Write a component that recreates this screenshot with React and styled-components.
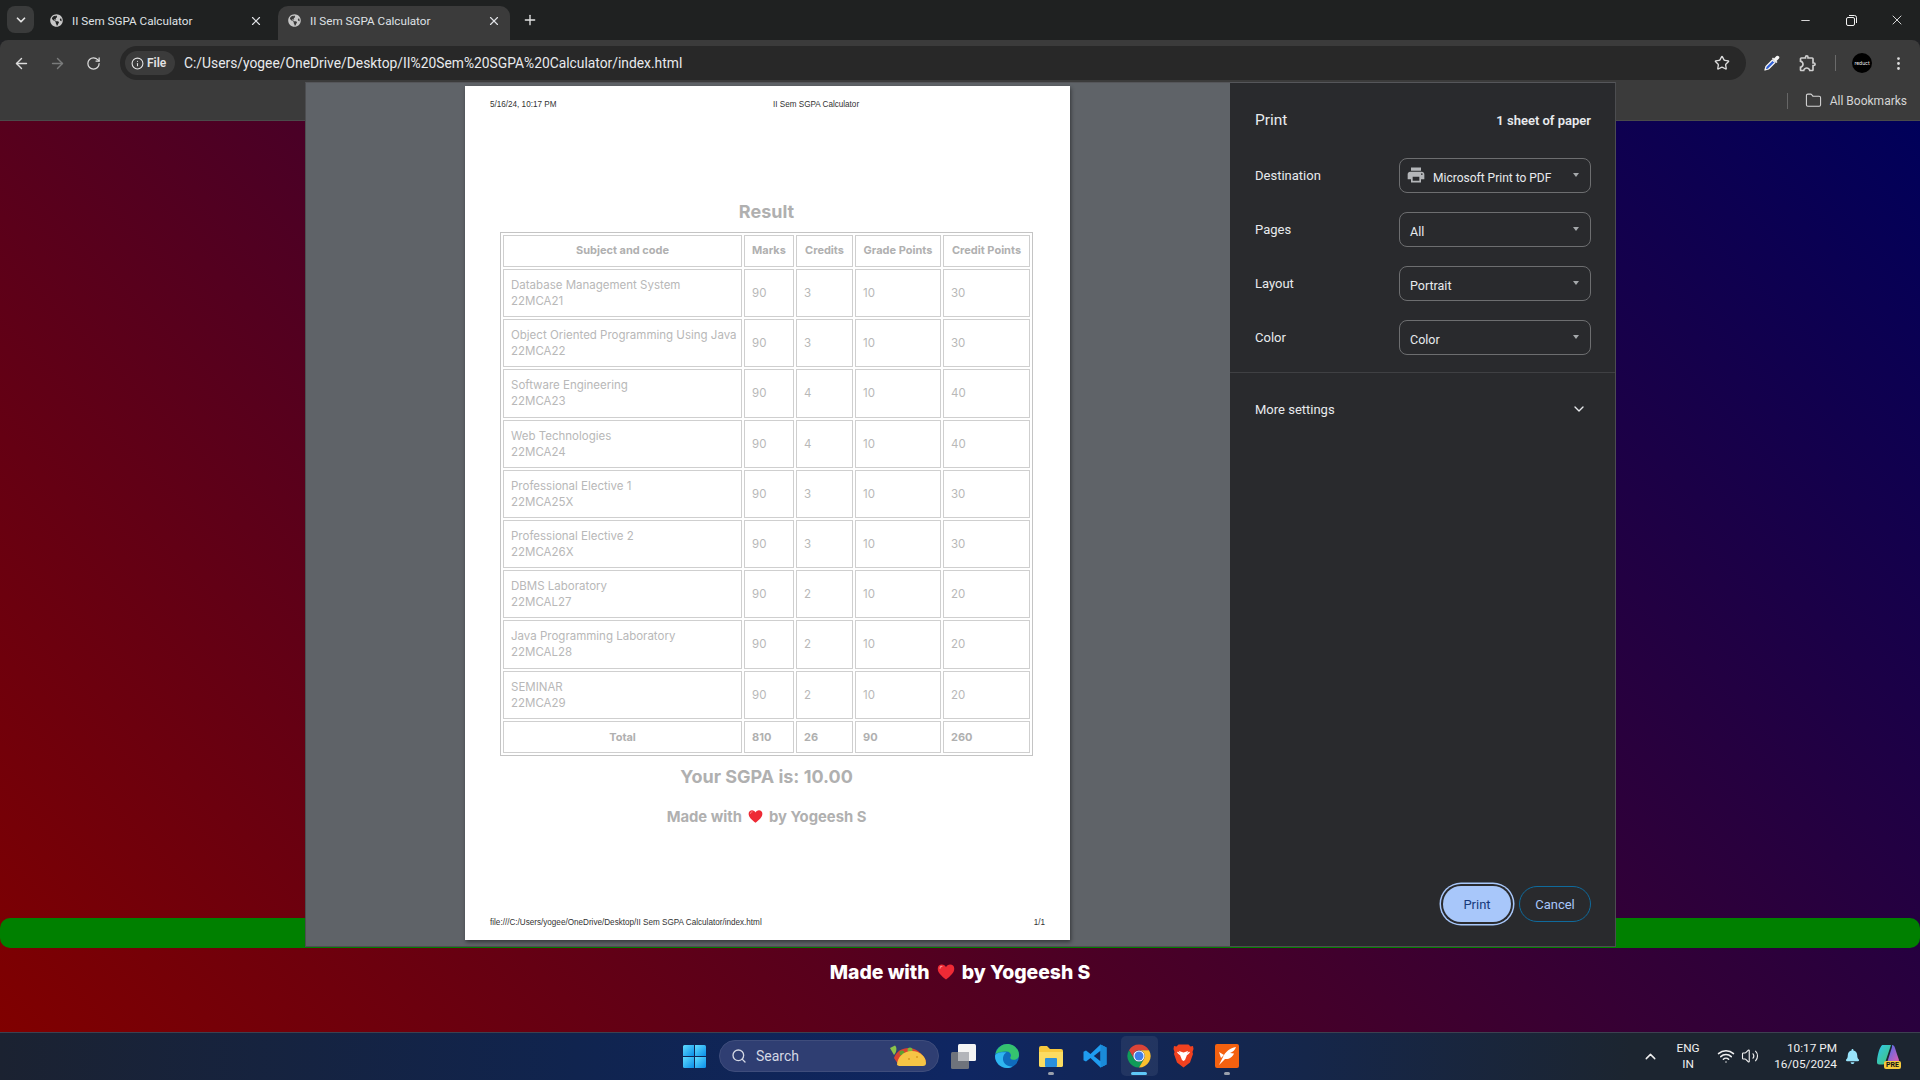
import React from 'react'
import styled, { createGlobalStyle } from 'styled-components'
import {
  ArrowLeft,
  ArrowRight,
  ChevronDown,
  ChevronUp,
  EllipsisVertical,
  Folder,
  Info,
  Minus,
  Plus,
  RotateCw,
  Search,
  Star,
  Volume2,
  Wifi,
  X,
} from 'lucide-react'
import { FaGlobeAmericas, FaBell } from 'react-icons/fa'
import { MdOutlineExtension, MdPrint } from 'react-icons/md'

const uiFont = `Roboto, "Noto Sans", sans-serif`
const docFont = `Inter, "Noto Sans", sans-serif`

const subjects = [
  { name: 'Database Management System', code: '22MCA21', credits: 3, points: 30 },
  { name: 'Object Oriented Programming Using Java', code: '22MCA22', credits: 3, points: 30 },
  { name: 'Software Engineering', code: '22MCA23', credits: 4, points: 40 },
  { name: 'Web Technologies', code: '22MCA24', credits: 4, points: 40 },
  { name: 'Professional Elective 1', code: '22MCA25X', credits: 3, points: 30 },
  { name: 'Professional Elective 2', code: '22MCA26X', credits: 3, points: 30 },
  { name: 'DBMS Laboratory', code: '22MCAL27', credits: 2, points: 20 },
  { name: 'Java Programming Laboratory', code: '22MCAL28', credits: 2, points: 20 },
  { name: 'SEMINAR', code: '22MCA29', credits: 2, points: 20 },
]

const GlobalStyle = createGlobalStyle`
  html, body {
    margin: 0;
    padding: 0;
    height: 100%;
    overflow: hidden;
    background: #202124;
    font-family: ${uiFont};
  }
  #root { height: 100%; }
  * { box-sizing: border-box; }
`

const Screen = styled.div`
  position: relative;
  display: flex;
  flex-direction: column;
  width: 1920px;
  height: 1080px;
  overflow: hidden;
`

/* browser chrome */
const TabStrip = styled.div`
  display: flex;
  align-items: flex-end;
  height: 40px;
  padding-left: 7px;
  background: #1f2121;
`

const TabMenu = styled.div`
  display: flex;
  align-items: center;
  justify-content: center;
  width: 27px;
  height: 27px;
  margin: 0 6px 7px 0;
  border-radius: 8px;
  background: #3a3b3b;
  color: #e3e3e3;
`

const Tab = styled.div`
  display: flex;
  align-items: center;
  width: 232px;
  height: 34px;
  margin-right: 6px;
  padding: 0 9px 5px 10px;
  border-radius: 10px 10px 0 0;
  background: ${({ $active }) => ($active ? '#3b3b3b' : 'transparent')};
  color: #dfe1e5;
  font-size: 11.7px;
`

const TabTitle = styled.span`
  flex: 1;
  margin-left: 9px;
  white-space: nowrap;
`

const NewTab = styled.div`
  display: flex;
  align-items: center;
  justify-content: center;
  width: 24px;
  height: 28px;
  margin: 0 0 6px 2px;
  color: #e3e3e3;
`

const WindowControls = styled.div`
  display: flex;
  align-self: stretch;
  margin-left: auto;
`

const WindowButton = styled.div`
  display: flex;
  align-items: center;
  justify-content: center;
  width: 46px;
  color: #f2f2f2;
`

const Toolbar = styled.div`
  display: flex;
  align-items: flex-start;
  height: 42px;
  padding: 6px 4px 0 3px;
  border-radius: 8px 8px 0 0;
  background: #3b3b3b;
`

const NavButton = styled.div`
  display: flex;
  align-items: center;
  justify-content: center;
  width: 36px;
  height: 34px;
  color: ${({ $dim }) => ($dim ? '#7a7b7b' : '#dcdcdc')};
`

const Omnibox = styled.div`
  display: flex;
  align-items: center;
  width: 1626px;
  height: 34px;
  margin: 0 8px 0 9px;
  padding: 0 16px 0 5px;
  border-radius: 17px;
  background: #282828;
`

const FileChip = styled.div`
  display: flex;
  align-items: center;
  gap: 3px;
  width: 50px;
  height: 24px;
  padding-left: 6px;
  border-radius: 12px;
  background: #3b3b3b;
  color: #e3e3e3;
  font-size: 12px;
  font-weight: 600;
`

const Url = styled.span`
  flex: 1;
  margin-left: 9px;
  color: #e8eaed;
  font-size: 13.83px;
  white-space: nowrap;
`

const ToolbarDivider = styled.div`
  width: 1px;
  height: 16px;
  margin: 9px 8px 0 9px;
  background: #6a6a6a;
`

const Avatar = styled.div`
  display: flex;
  align-items: center;
  justify-content: center;
  width: 20px;
  height: 20px;
  border-radius: 50%;
  background: #000;
  color: #eee;
  font-size: 5px;
  font-family: ${docFont};
`

const BookmarksBar = styled.div`
  display: flex;
  align-items: center;
  justify-content: flex-end;
  height: 39px;
  padding: 0 13px 1px 0;
  border-bottom: 1px solid #4a4a4a;
  background: #3b3b3b;
  color: #d5d5d5;
  font-size: 12px;
`

const BookmarkDivider = styled.div`
  width: 1px;
  height: 16px;
  margin-right: 17px;
  background: #666;
`

const BookmarkLabel = styled.span`
  margin-left: 8px;
`

/* page behind the print dialog */
const Backdrop = styled.main`
  flex: 1;
  display: flex;
  flex-direction: column;
  justify-content: flex-end;
  background: linear-gradient(45deg, #800000, #00005a);
`

const GreenBar = styled.div`
  height: 30px;
  border-radius: 10px;
  background: #008000;
`

const BackdropFooter = styled.div`
  display: flex;
  align-items: center;
  justify-content: center;
  gap: 7px;
  height: 84px;
  padding-bottom: 36px;
  color: #fff;
  font-family: ${docFont};
  font-size: 19.4px;
  font-weight: 800;
`

/* print dialog */
const PrintDialog = styled.div`
  position: absolute;
  top: 82px;
  left: 305px;
  display: flex;
  width: 1311px;
  height: 865px;
  border: 1px solid #4c4d50;
  border-top-color: #55565a;
`

const Preview = styled.div`
  flex: 1;
  display: flex;
  justify-content: center;
  padding: 3px 1px 0 0;
  background: #5f6368;
`

const Sheet = styled.div`
  display: flex;
  flex-direction: column;
  width: 605px;
  height: 854px;
  padding: 14px 25px 12px;
  background: #fff;
  box-shadow: 1px 2px 4px rgba(0, 0, 0, 0.45);
`

const SheetLine = styled.div`
  display: grid;
  grid-template-columns: ${({ $head }) => ($head ? '283px 1fr' : '1fr auto')};
  color: #333;
  font-family: "Liberation Sans", sans-serif;
  font-size: 8.15px;
  line-height: 10px;
  white-space: nowrap;
`

const SheetBody = styled.div`
  display: flex;
  flex-direction: column;
  align-items: center;
  margin: 90px -13px 0 -15px;
  color: #b0b0b0;
  font-family: ${docFont};
`

const ResultTitle = styled.h1`
  margin: 0 0 8px;
  font-size: 18px;
  line-height: 24px;
  font-weight: 700;
`

const ResultTable = styled.table`
  width: 533px;
  table-layout: fixed;
  border: 1px solid #c4c4c4;
  border-collapse: separate;
  border-spacing: 2px;
  font-size: 11.5px;
  line-height: 16px;
`

const Column = styled.col`
  width: ${({ $w }) => $w}px;
`

const HeadCell = styled.th`
  height: 32px;
  padding: 0 7px 2px;
  border: 1px solid #cfcfcf;
  font-size: 11px;
  font-weight: 700;
  text-align: ${({ $left }) => ($left ? 'left' : 'center')};
  white-space: nowrap;
`

const TotalCell = styled(HeadCell)`
  padding-bottom: 0;
`

const BodyCell = styled.td`
  height: 48.2px;
  padding: 0 7px;
  border: 1px solid #cfcfcf;
  color: #b8b8b8;
  font-weight: 400;
  white-space: nowrap;
`

const SgpaLine = styled.div`
  margin-top: 9px;
  font-size: 18px;
  line-height: 24px;
  font-weight: 700;
`

const MadeWith = styled.div`
  display: flex;
  align-items: center;
  gap: 6px;
  margin-top: 18px;
  font-size: 14.8px;
  line-height: 20px;
  font-weight: 700;
`

const SheetFoot = styled(SheetLine)`
  margin-top: auto;
`

const Sidebar = styled.aside`
  display: flex;
  flex-direction: column;
  width: 385px;
  padding-top: 27px;
  background: #292a2d;
  color: #e8eaed;
  font-size: 13px;
`

const SidebarHead = styled.div`
  display: flex;
  align-items: center;
  justify-content: space-between;
  height: 20px;
  margin-bottom: 28px;
  padding: 0 24px 0 25px;
`

const SidebarTitle = styled.span`
  font-size: 15.5px;
`

const SheetCount = styled.span`
  font-weight: 600;
`

const SettingRow = styled.div`
  display: flex;
  align-items: center;
  justify-content: space-between;
  height: 35px;
  margin-bottom: 19px;
  padding: 0 24px 0 25px;
`

const Select = styled.div`
  position: relative;
  display: flex;
  align-items: center;
  width: 192px;
  height: 35px;
  padding: 4px 0 0 ${({ $icon }) => ($icon ? '6px' : '10px')};
  border: 1px solid #6d6e70;
  border-radius: 8px;
  font-size: 12.5px;
`

const SelectIcon = styled(MdPrint)`
  margin: -5px 7px 0 0;
  color: #b4b6b9;
`

const DestinationName = styled.span`
  font-size: 12px;
`

const Caret = styled.span`
  position: absolute;
  top: 14px;
  right: 11px;
  border-left: 3.5px solid transparent;
  border-right: 3.5px solid transparent;
  border-top: 4.5px solid #a5a8ab;
`

const SidebarRule = styled.div`
  height: 1px;
  margin-top: -2px;
  background: #3f4043;
`

const MoreSettings = styled.div`
  display: flex;
  align-items: center;
  justify-content: space-between;
  margin-top: 26px;
  padding: 0 28px 0 25px;
  height: 20px;
`

const DialogActions = styled.div`
  display: flex;
  justify-content: flex-end;
  gap: 8px;
  margin-top: auto;
  padding: 0 24px 24px;
`

const PrintButton = styled.div`
  display: flex;
  align-items: center;
  justify-content: center;
  width: 68px;
  height: 36px;
  border-radius: 18px;
  background: #a8c7fa;
  box-shadow: 0 0 0 2px #292a2d, 0 0 0 3.5px #a8c7fa;
  color: #17397a;
  font-size: 13px;
`

const CancelButton = styled.div`
  display: flex;
  align-items: center;
  justify-content: center;
  width: 72px;
  height: 36px;
  border: 1px solid #0f6a9c;
  border-radius: 18px;
  color: #a8c7fa;
  font-size: 13px;
`

/* windows taskbar */
const Taskbar = styled.footer`
  position: relative;
  display: flex;
  align-items: center;
  height: 48px;
  padding-bottom: 1px;
  border-top: 1px solid #3c4150;
  background: linear-gradient(90deg, #1b2231 0%, #10244f 30%, #0f2662 50%, #15264a 68%, #1c2530 85%);
`

const TaskIcons = styled.div`
  display: flex;
  align-items: center;
  margin-left: 683px;
`

const SearchPill = styled.div`
  display: flex;
  align-items: center;
  width: 220px;
  height: 32px;
  margin: 0 2px 0 13px;
  padding: 0 10px 0 11px;
  border-radius: 16px;
  background: #2f3e72;
  border: 1px solid #3f4d7c;
  color: #d4d8e4;
  font-size: 14px;
`

const SearchLabel = styled.span`
  flex: 1;
  margin-left: 9px;
`

const TaskItem = styled.div`
  position: relative;
  display: flex;
  align-items: center;
  justify-content: center;
  width: 37px;
  height: 40px;
  margin: 0 3.5px;
  border-radius: 5px;
  background: ${({ $active }) => ($active ? 'rgba(255,255,255,0.07)' : 'transparent')};
`

const TaskDot = styled.span`
  position: absolute;
  bottom: 1px;
  left: 50%;
  width: ${({ $active }) => ($active ? '16px' : '6px')};
  height: 3px;
  margin-left: ${({ $active }) => ($active ? '-8px' : '-3px')};
  border-radius: 2px;
  background: ${({ $active }) => ($active ? '#5fc8f8' : '#9aa0ac')};
`

const Tray = styled.div`
  display: flex;
  align-items: center;
  margin-left: auto;
  padding-right: 11px;
  color: #f0f0f0;
  font-size: 11.8px;
`

const TrayText = styled.div`
  line-height: 16px;
  text-align: ${({ $align }) => $align};
  white-space: nowrap;
`

const TraySlot = styled.div`
  display: flex;
  align-items: center;
  justify-content: ${({ $end }) => ($end ? 'flex-end' : 'center')};
  width: ${({ $w }) => $w}px;
`

const CopilotBadge = styled.div`
  position: relative;
  display: flex;
  justify-content: center;
  width: 26px;
  height: 26px;
`

const PreTag = styled.span`
  position: absolute;
  right: 0;
  bottom: 0;
  padding: 0 2px;
  border-radius: 2px;
  background: #f6c93c;
  color: #111;
  font-size: 7px;
  font-weight: 700;
  line-height: 8px;
`

function Heart({ size = 14 }) {
  return (
    <svg width={size} height={size} viewBox="0 0 24 24">
      <path d="M12 22C6 17 1 13 1 7.500C1 4 3.500 2 6.500 2C9 2 11 3.500 12 5.500C13 3.500 15 2 17.500 2C20.500 2 23 4 23 7.500C23 13 18 17 12 22Z" fill="#ee2a35" />
      <path d="M4 7C4 5.500 5 4.500 6.500 4.500" stroke="#ff8f8f" strokeWidth="1.500" fill="none" strokeLinecap="round" />
    </svg>
  )
}

function RestoreIcon() {
  return (
    <svg width="11" height="11" viewBox="0 0 11 11" fill="none" stroke="currentColor">
      <rect x="0.500" y="2.500" width="8" height="8" rx="1.500" />
      <path d="M3 0.500H8.500A2 2 0 0 1 10.500 2.500V8" />
    </svg>
  )
}

function EyeDropper() {
  return (
    <svg width="18" height="18" viewBox="0 0 18 18">
      <path d="M2 16L3 12.500L9.500 6L12 8.500L5.500 15Z" fill="#2f5fd6" stroke="#f2f2f2" strokeWidth="1.300" strokeLinejoin="round" />
      <path d="M9 4.500L13.500 9L14.500 8L13.500 7L16 4.500A1.800 1.800 0 0 0 13.500 2L11 4.500L10 3.500Z" fill="#f5f5f5" />
    </svg>
  )
}

function WindowsLogo() {
  return (
    <svg width="23" height="23" viewBox="0 0 23 23">
      <defs>
        <linearGradient id="winBlue" x1="0" y1="0" x2="1" y2="1">
          <stop offset="0" stopColor="#5fdcff" />
          <stop offset="1" stopColor="#0a8fe8" />
        </linearGradient>
      </defs>
      <path d="M1.500 0H11V11H0V1.500A1.500 1.500 0 0 1 1.500 0Z" fill="url(#winBlue)" />
      <path d="M12 0H21.500A1.500 1.500 0 0 1 23 1.500V11H12Z" fill="url(#winBlue)" />
      <path d="M0 12H11V23H1.500A1.500 1.500 0 0 1 0 21.500Z" fill="url(#winBlue)" />
      <path d="M12 12H23V21.500A1.500 1.500 0 0 1 21.500 23H12Z" fill="url(#winBlue)" />
    </svg>
  )
}

function TacoIcon() {
  return (
    <svg width="40" height="24" viewBox="0 0 40 24">
      <path d="M2 4L7 1.500C9 3 9 8 6 11Z" fill="#8bc34a" />
      <path d="M6 14C9 4 22 1 30 7C34 10 37 14 38 17L10 20Z" fill="#d9432f" />
      <circle cx="14" cy="9" r="2.500" fill="#5fa02e" />
      <circle cx="22" cy="6" r="2.500" fill="#7cb83a" />
      <path d="M9 21C9 13 16 7 24 7C32 7 38 13 38 19C38 21 37 22 35 22H11Z" fill="#f6c445" />
      <circle cx="21" cy="15" r="1" fill="#d89a1f" />
      <circle cx="29" cy="13" r="1" fill="#d89a1f" />
    </svg>
  )
}

function TaskViewIcon() {
  return (
    <svg width="25" height="25" viewBox="0 0 25 25">
      <rect x="0" y="8" width="18" height="17" rx="1.500" fill="#6f737c" />
      <rect x="7" y="0" width="18" height="17" rx="1.500" fill="#f4f4f4" />
      <rect x="7" y="8" width="11" height="9" fill="#b3b5ba" />
    </svg>
  )
}

function EdgeIcon() {
  return (
    <svg width="24" height="24" viewBox="0 0 24 24">
      <circle cx="12" cy="12" r="12" fill="#0f6cbd" />
      <path d="M0.500 10C2 3 8 0 12 0C19 0 24 5 24 11C24 15 20 16.500 17 15.500C15.500 15 15 14 15.500 13C17 11 15 7.500 11.500 7.500C6 7.500 2 9 0.500 10Z" fill="#35c26f" />
      <path d="M0 12C0 19 6 24 12 24C14 24 16 23.500 17.500 22.500C12 23 7.500 19 8 14C8.300 11 10 9 11.500 8.500C6 7.500 0.500 9 0 12Z" fill="#2fb6f0" />
    </svg>
  )
}

function ExplorerIcon() {
  return (
    <svg width="24" height="21" viewBox="0 0 24 21">
      <path d="M0 2A2 2 0 0 1 2 0H8L11 3H22A2 2 0 0 1 24 5V19A2 2 0 0 1 22 21H2A2 2 0 0 1 0 19Z" fill="#f7c93e" />
      <path d="M0 6H24V19A2 2 0 0 1 22 21H2A2 2 0 0 1 0 19Z" fill="#fbdc62" />
      <rect x="6" y="12" width="12" height="9" rx="1" fill="#2a8fdc" />
    </svg>
  )
}

function VsCodeIcon() {
  return (
    <svg width="24" height="24" viewBox="0 0 24 24">
      <path d="M17.500 0.500L23.500 3.500V20.500L17.500 23.500L7.500 14L3 17.500L0.500 16.300V7.700L3 6.500L7.500 10ZM17.500 6.800L10.800 12L17.500 17.200Z" fill="#1f9cf0" fillRule="evenodd" />
      <path d="M17.500 0.500L23.500 3.500V20.500L17.500 23.500Z" fill="#1a8ad8" />
    </svg>
  )
}

function ChromeIcon() {
  return (
    <svg width="24" height="24" viewBox="0 0 24 24">
      <path d="M2 6.200A11.500 11.500 0 0 1 22 6.200H12A5.800 5.800 0 0 0 7 14.900Z" fill="#db4437" />
      <path d="M2 6.200A11.500 11.500 0 0 0 12 23.500L17 14.900A5.800 5.800 0 0 1 7 14.900Z" fill="#0f9d58" />
      <path d="M22 6.200A11.500 11.500 0 0 1 12 23.500L17 14.900A5.800 5.800 0 0 0 12 6.200Z" fill="#fbc02d" />
      <circle cx="12" cy="12" r="5.600" fill="#fff" />
      <circle cx="12" cy="12" r="4.500" fill="#3f7fe8" />
    </svg>
  )
}

function BraveIcon() {
  return (
    <svg width="21" height="24" viewBox="0 0 21 24">
      <path d="M5.500 0.500H15.500L17.500 2.500L20 2L20.500 5L19.500 8L20 10L17 18.500L10.500 23.500L4 18.500L1 10L1.500 8L0.500 5L1 2L3.500 2.500Z" fill="#f1411f" />
      <path d="M6 7L10.500 8.500L15 7L14 11L12 16L10.500 17L9 16L7 11Z" fill="#fff" />
      <path d="M4.500 8L7 10.500M16.500 8L14 10.500" stroke="#fff" strokeWidth="1.300" />
    </svg>
  )
}

function SublimeStyleIcon() {
  return (
    <svg width="24" height="24" viewBox="0 0 24 24">
      <rect width="24" height="24" rx="2" fill="#f4610f" />
      <path d="M4 21L8 13C10 8 15 4 21 3C20 6 18 8 15 9L19 9.500C17.500 13 14 15.500 10 15Z" fill="#fff" />
      <path d="M4 8L9 11L6 14Z" fill="#fff" />
    </svg>
  )
}

function CopilotIcon() {
  return (
    <svg width="24" height="24" viewBox="0 0 24 24">
      <defs>
        <linearGradient id="copilotLeft" x1="0" y1="0" x2="1" y2="1">
          <stop offset="0" stopColor="#2fc7f0" />
          <stop offset="1" stopColor="#44c36d" />
        </linearGradient>
        <linearGradient id="copilotRight" x1="0" y1="0" x2="1" y2="1">
          <stop offset="0" stopColor="#3f6ff0" />
          <stop offset="1" stopColor="#e45bb0" />
        </linearGradient>
      </defs>
      <path d="M7 2H15L9 20C8.500 21 7.500 21.500 6 21.500H3A2 2 0 0 1 1 19.500C1 14 3 6 5 3.500C5.500 2.500 6 2 7 2Z" fill="url(#copilotLeft)" />
      <path d="M16 2C17.500 2 18.500 3 19 5C20.500 10 22 14 23 17C23 19 22 20 20 20H11L16 4Z" fill="url(#copilotRight)" />
    </svg>
  )
}

export default function App() {
  return (
    <Screen>
      <GlobalStyle />
      <TabStrip>
        <TabMenu><ChevronDown size={14} strokeWidth={3} /></TabMenu>
        <Tab>
          <FaGlobeAmericas size={13} color="#c7c7c7" />
          <TabTitle>II Sem SGPA Calculator</TabTitle>
          <X size={14} strokeWidth={2} />
        </Tab>
        <Tab $active>
          <FaGlobeAmericas size={13} color="#c7c7c7" />
          <TabTitle>II Sem SGPA Calculator</TabTitle>
          <X size={14} strokeWidth={2} />
        </Tab>
        <NewTab><Plus size={16} strokeWidth={2} /></NewTab>
        <WindowControls>
          <WindowButton><Minus size={13} strokeWidth={1.600} /></WindowButton>
          <WindowButton><RestoreIcon /></WindowButton>
          <WindowButton><X size={16} strokeWidth={1.300} /></WindowButton>
        </WindowControls>
      </TabStrip>

      <Toolbar>
        <NavButton><ArrowLeft size={17} strokeWidth={2} /></NavButton>
        <NavButton $dim><ArrowRight size={17} strokeWidth={2} /></NavButton>
        <NavButton><RotateCw size={15} strokeWidth={2} /></NavButton>
        <Omnibox>
          <FileChip><Info size={13} />File</FileChip>
          <Url>C:/Users/yogee/OneDrive/Desktop/II%20Sem%20SGPA%20Calculator/index.html</Url>
          <Star size={16} color="#dcdcdc" strokeWidth={2} />
        </Omnibox>
        <NavButton><EyeDropper /></NavButton>
        <NavButton><MdOutlineExtension size={20} color="#d0d0d0" /></NavButton>
        <ToolbarDivider />
        <NavButton><Avatar>reduct</Avatar></NavButton>
        <NavButton><EllipsisVertical size={17} /></NavButton>
      </Toolbar>

      <BookmarksBar>
        <BookmarkDivider />
        <Folder size={17} strokeWidth={1.500} />
        <BookmarkLabel>All Bookmarks</BookmarkLabel>
      </BookmarksBar>

      <Backdrop>
        <GreenBar />
        <BackdropFooter>
          Made with <Heart size={18} /> by Yogeesh S
        </BackdropFooter>
      </Backdrop>

      <PrintDialog>
        <Preview>
          <Sheet>
            <SheetLine $head>
              <span>5/16/24, 10:17 PM</span>
              <span>II Sem SGPA Calculator</span>
            </SheetLine>
            <SheetBody>
              <ResultTitle>Result</ResultTitle>
              <ResultTable>
                <colgroup>
                  <Column $w={239} />
                  <Column $w={50} />
                  <Column $w={57} />
                  <Column $w={86} />
                  <Column $w={87} />
                </colgroup>
                <thead>
                  <tr>
                    <HeadCell>Subject and code</HeadCell>
                    <HeadCell>Marks</HeadCell>
                    <HeadCell>Credits</HeadCell>
                    <HeadCell>Grade Points</HeadCell>
                    <HeadCell>Credit Points</HeadCell>
                  </tr>
                </thead>
                <tbody>
                  {subjects.map((row) => (
                    <tr key={row.code}>
                      <BodyCell>
                        <div>{row.name}</div>
                        <div>{row.code}</div>
                      </BodyCell>
                      <BodyCell>90</BodyCell>
                      <BodyCell>{row.credits}</BodyCell>
                      <BodyCell>10</BodyCell>
                      <BodyCell>{row.points}</BodyCell>
                    </tr>
                  ))}
                  <tr>
                    <TotalCell>Total</TotalCell>
                    <TotalCell $left>810</TotalCell>
                    <TotalCell $left>26</TotalCell>
                    <TotalCell $left>90</TotalCell>
                    <TotalCell $left>260</TotalCell>
                  </tr>
                </tbody>
              </ResultTable>
              <SgpaLine>Your SGPA is: 10.00</SgpaLine>
              <MadeWith>Made with <Heart size={15} /> by Yogeesh S</MadeWith>
            </SheetBody>
            <SheetFoot>
              <span>file:///C:/Users/yogee/OneDrive/Desktop/II Sem SGPA Calculator/index.html</span>
              <span>1/1</span>
            </SheetFoot>
          </Sheet>
        </Preview>

        <Sidebar>
          <SidebarHead>
            <SidebarTitle>Print</SidebarTitle>
            <SheetCount>1 sheet of paper</SheetCount>
          </SidebarHead>
          <SettingRow>
            <span>Destination</span>
            <Select $icon>
              <SelectIcon size={20} />
              <DestinationName>Microsoft Print to PDF</DestinationName>
              <Caret />
            </Select>
          </SettingRow>
          <SettingRow>
            <span>Pages</span>
            <Select>All<Caret /></Select>
          </SettingRow>
          <SettingRow>
            <span>Layout</span>
            <Select>Portrait<Caret /></Select>
          </SettingRow>
          <SettingRow>
            <span>Color</span>
            <Select>Color<Caret /></Select>
          </SettingRow>
          <SidebarRule />
          <MoreSettings>
            <span>More settings</span>
            <ChevronDown size={16} strokeWidth={2} />
          </MoreSettings>
          <DialogActions>
            <PrintButton>Print</PrintButton>
            <CancelButton>Cancel</CancelButton>
          </DialogActions>
        </Sidebar>
      </PrintDialog>

      <Taskbar>
        <TaskIcons>
          <WindowsLogo />
          <SearchPill>
            <Search size={16} strokeWidth={2} />
            <SearchLabel>Search</SearchLabel>
            <TacoIcon />
          </SearchPill>
          <TaskItem><TaskViewIcon /></TaskItem>
          <TaskItem><EdgeIcon /></TaskItem>
          <TaskItem><ExplorerIcon /><TaskDot /></TaskItem>
          <TaskItem><VsCodeIcon /></TaskItem>
          <TaskItem $active><ChromeIcon /><TaskDot $active /></TaskItem>
          <TaskItem><BraveIcon /></TaskItem>
          <TaskItem><SublimeStyleIcon /><TaskDot /></TaskItem>
        </TaskIcons>
        <Tray>
          <TraySlot $w={24}><ChevronUp size={17} strokeWidth={2} /></TraySlot>
          <TraySlot $w={52}>
            <TrayText $align="center">ENG<br />IN</TrayText>
          </TraySlot>
          <TraySlot $w={24}><Wifi size={18} /></TraySlot>
          <TraySlot $w={24}><Volume2 size={18} strokeWidth={1.500} /></TraySlot>
          <TraySlot $w={75} $end>
            <TrayText $align="right">10:17 PM<br />16/05/2024</TrayText>
          </TraySlot>
          <TraySlot $w={30}><FaBell size={15} color="#98e4fb" /></TraySlot>
          <TraySlot $w={42}>
            <CopilotBadge>
              <CopilotIcon />
              <PreTag>PRE</PreTag>
            </CopilotBadge>
          </TraySlot>
        </Tray>
      </Taskbar>
    </Screen>
  )
}
